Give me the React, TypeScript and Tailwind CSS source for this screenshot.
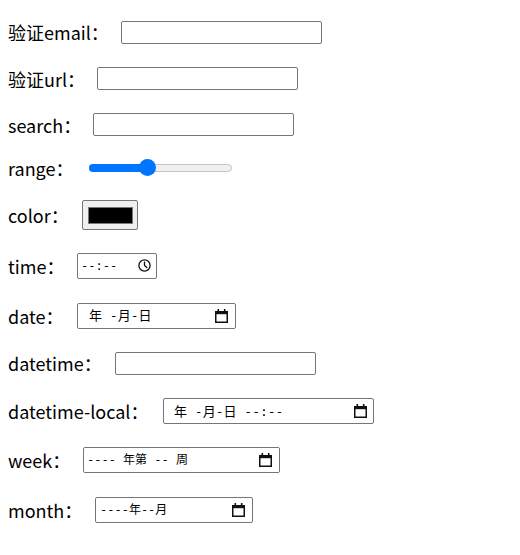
import React from "react";

const labelFont = { fontFamily: '"Noto Sans CJK SC", "Noto Sans", sans-serif' };
const fieldFont = { fontFamily: '"DejaVu Sans Mono", "Noto Sans CJK SC", monospace' };

function CalendarIcon() {
  return (
    <svg width="13" height="14" viewBox="0 0 13 14" className="shrink-0">
      <rect x="0.75" y="2.75" width="11.5" height="10.5" fill="none" stroke="#111" strokeWidth="1.5" />
      <rect x="0" y="2" width="13" height="3.2" fill="#111" />
      <rect x="2.5" y="0" width="1.6" height="3" fill="#111" />
      <rect x="8.9" y="0" width="1.6" height="3" fill="#111" />
    </svg>
  );
}

function ClockIcon() {
  return (
    <svg width="13" height="13" viewBox="0 0 13 13" className="shrink-0">
      <circle cx="6.5" cy="6.5" r="5.6" fill="none" stroke="#111" strokeWidth="1.3" />
      <path d="M6.5 3.2 V6.6 L8.8 8.6" fill="none" stroke="#111" strokeWidth="1.3" strokeLinecap="round" strokeLinejoin="round" />
    </svg>
  );
}

function TextBox() {
  return <div className="w-[201px] h-[23px] border border-[#767676] rounded-[2px] bg-white" />;
}

export default function App() {
  return (
    <div className="bg-white min-h-[555px] w-[520px] pt-[9px] pl-[8px] text-black" style={labelFont}>
      {/* email */}
      <div className="flex items-center h-[46px]">
        <span className="w-[113px] text-[18px] leading-[26px]">验证email：</span>
        <TextBox />
      </div>
      {/* url */}
      <div className="flex items-center h-[47px]">
        <span className="w-[89px] text-[18px] leading-[26px]">验证url：</span>
        <TextBox />
      </div>
      {/* search */}
      <div className="flex items-center h-[45px]">
        <span className="w-[85px] text-[18px] leading-[26px]">search：</span>
        <TextBox />
      </div>
      {/* range */}
      <div className="flex items-center h-[41px]">
        <span className="w-[81px] text-[18px] leading-[26px]">range：</span>
        <div className="relative w-[143px] h-[17px]">
          <div className="absolute left-0 right-0 top-[4.5px] h-[8px] rounded-full bg-[#efefef] border border-[#c4c4c4]" />
          <div className="absolute left-0 w-[62px] top-[4.5px] h-[8px] rounded-full bg-[#0075ff]" />
          <div className="absolute left-[50px] top-0 w-[17px] h-[17px] rounded-full bg-[#0075ff]" />
        </div>
      </div>
      {/* color */}
      <div className="flex items-center h-[54px]">
        <span className="w-[74px] text-[18px] leading-[26px]">color：</span>
        <div className="w-[56px] h-[30px] border border-[#767676] rounded-[2px] bg-[#efefef] flex items-center justify-center">
          <div className="w-[45px] h-[17px] bg-black border border-[#777777]" />
        </div>
      </div>
      {/* time */}
      <div className="flex items-center h-[47px]">
        <span className="w-[69px] text-[18px] leading-[26px]">time：</span>
        <div className="w-[80px] h-[26px] border border-[#767676] rounded-[2px] flex items-center justify-between pl-[3px] pr-[5px]" style={fieldFont}>
          <span className="text-[12px] leading-none">--:--</span>
          <ClockIcon />
        </div>
      </div>
      {/* date */}
      <div className="flex items-center h-[53px]">
        <span className="w-[69px] text-[18px] leading-[26px]">date：</span>
        <div className="w-[159px] h-[26px] border border-[#767676] rounded-[2px] flex items-center justify-between pl-[11px] pr-[7px]" style={fieldFont}>
          <span className="text-[13px] leading-none whitespace-pre">年 -月-日</span>
          <CalendarIcon />
        </div>
      </div>
      {/* datetime */}
      <div className="flex items-center h-[42px]">
        <span className="w-[107px] text-[18px] leading-[26px]">datetime：</span>
        <TextBox />
      </div>
      {/* datetime-local */}
      <div className="flex items-center h-[54px]">
        <span className="w-[155px] text-[18px] leading-[26px]">datetime-local：</span>
        <div className="w-[211px] h-[26px] border border-[#767676] rounded-[2px] flex items-center justify-between pl-[10px] pr-[6px]" style={fieldFont}>
          <span className="text-[13px] leading-none whitespace-pre">年 -月-日 --:--</span>
          <CalendarIcon />
        </div>
      </div>
      {/* week */}
      <div className="flex items-center h-[44px]">
        <span className="w-[75px] text-[18px] leading-[26px]">week：</span>
        <div className="w-[197px] h-[26px] border border-[#767676] rounded-[2px] flex items-center justify-between pl-[3px] pr-[7px]" style={fieldFont}>
          <span className="text-[12px] leading-none whitespace-pre">---- 年第 -- 周</span>
          <CalendarIcon />
        </div>
      </div>
      {/* month */}
      <div className="flex items-center h-[56px]">
        <span className="w-[87px] text-[18px] leading-[26px]">month：</span>
        <div className="w-[158px] h-[26px] border border-[#767676] rounded-[2px] flex items-center justify-between pl-[4px] pr-[7px]" style={fieldFont}>
          <span className="text-[12px] leading-none whitespace-pre">----年--月</span>
          <CalendarIcon />
        </div>
      </div>
    </div>
  );
}
